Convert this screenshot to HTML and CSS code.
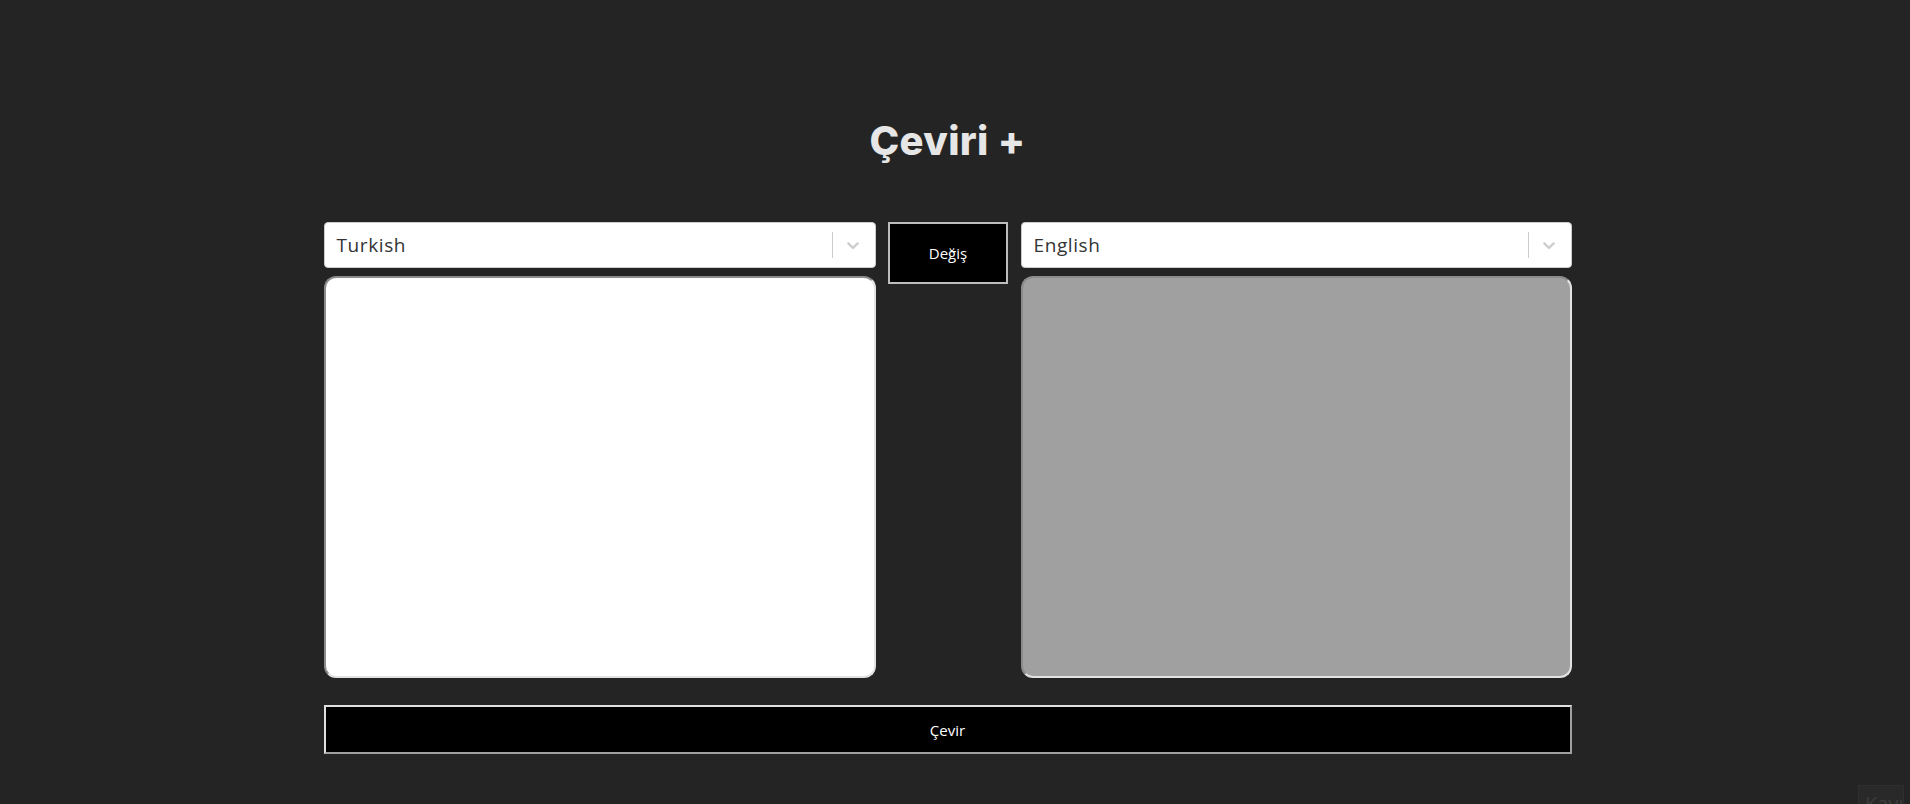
FILE: index.html
```html
<!DOCTYPE html>
<html lang="tr">
<head>
<meta charset="utf-8">
<title>Çeviri +</title>
<link rel="stylesheet" href="styles.css">
</head>
<body>
<div class="page">
  <h1 class="title">Çeviri +</h1>
  <div class="app">
    <div class="select">
      <span class="select-value">Turkish</span>
      <span class="select-sep"></span>
      <span class="select-ind">
        <svg viewBox="0 0 20 20" width="20" height="20"><path d="M4.516 7.548c0.436-0.446 1.043-0.481 1.576 0l3.908 3.747 3.908-3.747c0.533-0.481 1.141-0.446 1.574 0 0.436 0.445 0.408 1.197 0 1.615-0.406 0.418-4.695 4.502-4.695 4.502-0.217 0.223-0.502 0.335-0.787 0.335s-0.57-0.112-0.789-0.335c0 0-4.287-4.084-4.695-4.502s-0.436-1.17 0-1.615z"/></svg>
      </span>
    </div>
    <button class="swap">Değiş</button>
    <div class="select">
      <span class="select-value">English</span>
      <span class="select-sep"></span>
      <span class="select-ind">
        <svg viewBox="0 0 20 20" width="20" height="20"><path d="M4.516 7.548c0.436-0.446 1.043-0.481 1.576 0l3.908 3.747 3.908-3.747c0.533-0.481 1.141-0.446 1.574 0 0.436 0.445 0.408 1.197 0 1.615-0.406 0.418-4.695 4.502-4.695 4.502-0.217 0.223-0.502 0.335-0.787 0.335s-0.57-0.112-0.789-0.335c0 0-4.287-4.084-4.695-4.502s-0.436-1.17 0-1.615z"/></svg>
      </span>
    </div>
    <textarea class="text text-source"></textarea>
    <textarea class="text text-target" disabled></textarea>
    <button class="translate">Çevir</button>
  </div>
</div>
<div class="login">Kayıt</div>
</body>
</html>
```

FILE: styles.css
```css
html, body {
  margin: 0;
  padding: 0;
  background: #242424;
  height: 100%;
  overflow: hidden;
}

body {
  font-family: "Open Sans", "Liberation Sans", sans-serif;
  color: #e8e8e8;
}

.page {
  width: 1895px;
  padding-top: 105px;
}

.title {
  margin: 0 0 45px;
  text-align: center;
  font-family: Inter, "Open Sans", sans-serif;
  font-weight: 800;
  font-size: 40px;
  line-height: 72px;
  color: #e6e6e6;
  letter-spacing: 0.3px;
}

.app {
  width: 1248px;
  margin: 0 auto;
  display: grid;
  grid-template-columns: 552px 145px 551px;
  grid-template-rows: 46px 402px auto;
  row-gap: 8px;
}

.select {
  grid-row: 1;
  box-sizing: border-box;
  height: 46px;
  background: #fff;
  border: 1px solid #cccccc;
  border-radius: 4px;
  display: flex;
  align-items: center;
}

.select-value {
  flex: 1;
  padding-left: 12px;
  font-size: 19px;
  letter-spacing: 0.6px;
  color: #333333;
}

.select-sep {
  align-self: stretch;
  width: 1px;
  margin: 9px 0;
  background: #cccccc;
}

.select-ind {
  display: flex;
  padding: 0 12px 0 10px;
  fill: #cccccc;
}

.swap {
  grid-column: 2;
  grid-row: 1 / span 2;
  justify-self: center;
  align-self: start;
  width: 120px;
  height: 62px;
  box-sizing: border-box;
  background: #000;
  color: #fff;
  border: 2px solid #bdbdbd;
  font-family: "Open Sans", sans-serif;
  font-size: 15px;
  cursor: pointer;
}

.text {
  grid-row: 2;
  box-sizing: border-box;
  height: 402px;
  border-radius: 12px;
  border-style: solid;
  border-width: 2px;
  border-color: #8c8c8c #e2e2e2 #e2e2e2 #8c8c8c;
  resize: none;
  padding: 8px;
  margin: 0;
  font-family: "Open Sans", sans-serif;
  font-size: 16px;
}

.text-source {
  grid-column: 1;
  background: #fff;
}

.text-target {
  grid-column: 3;
  background: #a0a0a0;
}

.translate {
  grid-column: 1 / span 3;
  grid-row: 3;
  margin-top: 19px;
  height: 49px;
  box-sizing: border-box;
  background: #000;
  color: #fff;
  border-style: solid;
  border-width: 2px;
  border-color: #e0e0e0 #a0a0a0 #a0a0a0 #e0e0e0;
  font-family: "Open Sans", sans-serif;
  font-size: 15px;
  cursor: pointer;
}

.login {
  position: fixed;
  right: 6px;
  top: 785px;
  width: 46px;
  height: 40px;
  box-sizing: border-box;
  background: #292929;
  border: 1px solid #2f2f2f;
  color: #3d3d3d;
  font-size: 20px;
  padding: 4px 0 0 6px;
  overflow: hidden;
  white-space: nowrap;
}
```
